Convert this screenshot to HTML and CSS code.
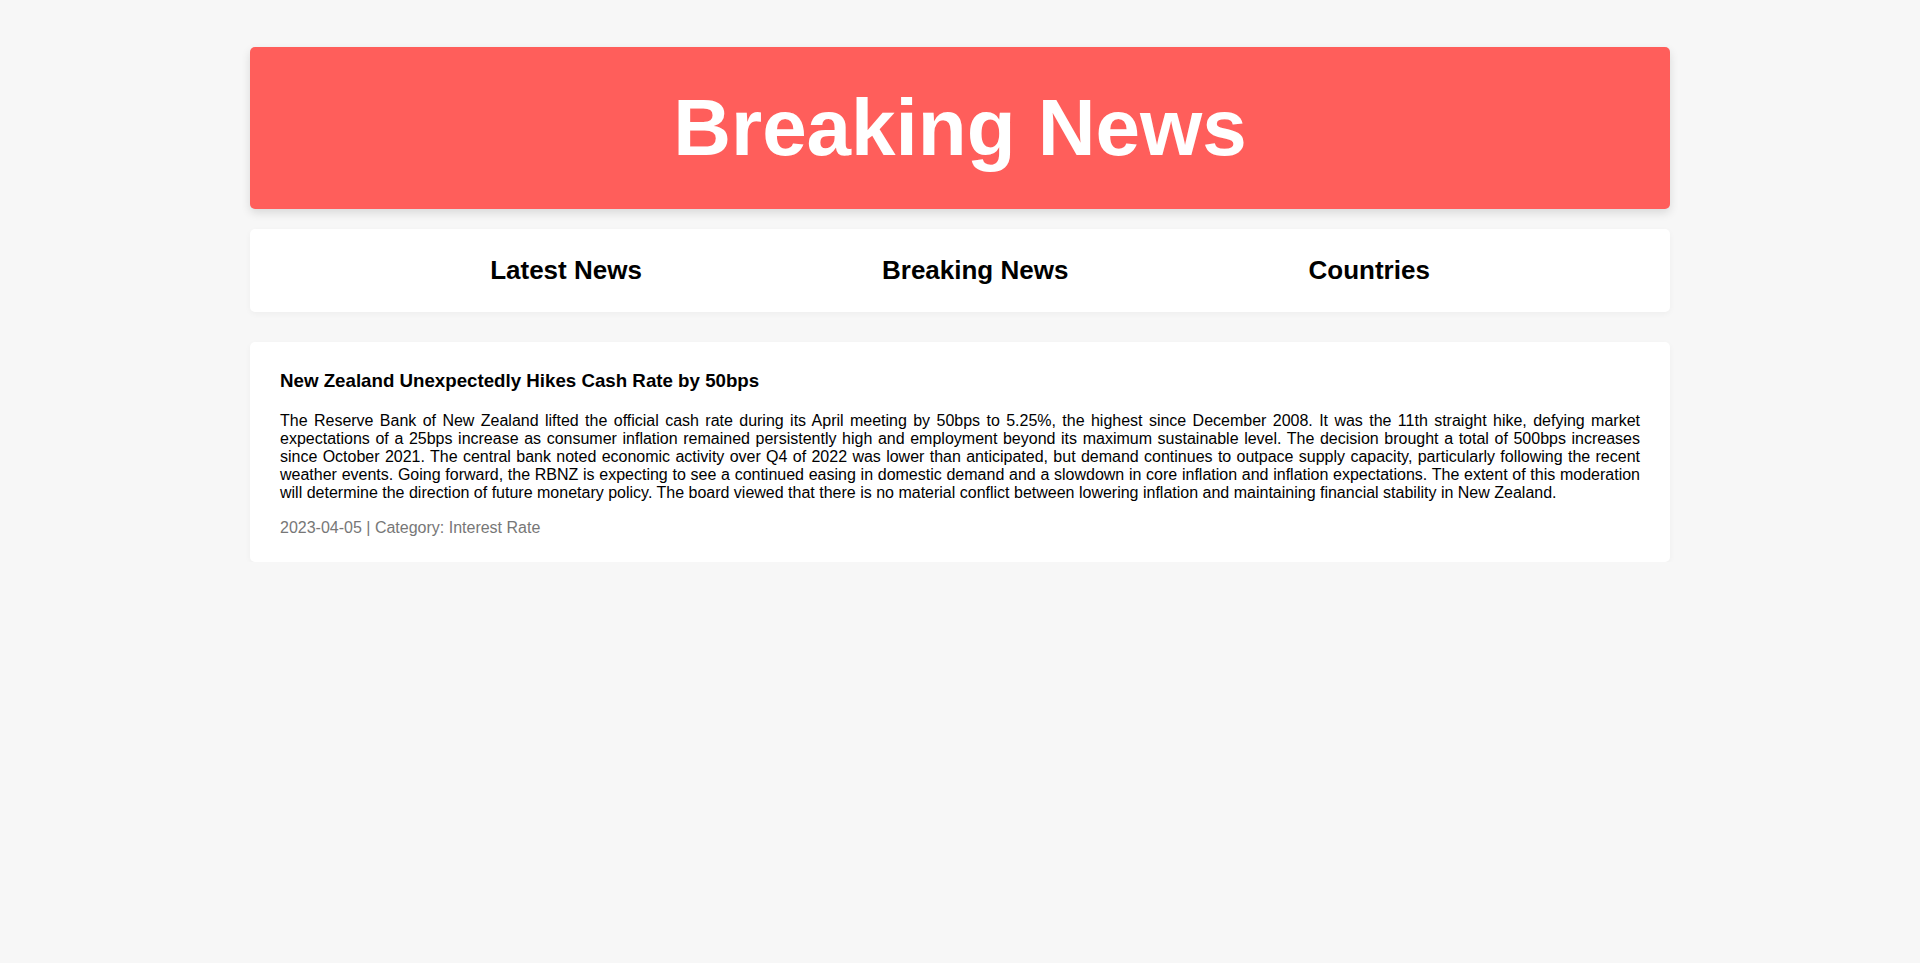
FILE: index.html
```html
<!DOCTYPE html>
<html lang="en">
<head>
<meta charset="utf-8">
<title>Breaking News</title>
<link rel="stylesheet" href="styles.css">
</head>
<body>
<div class="container">
  <header class="banner">
    <h1 class="banner-title">Breaking News</h1>
  </header>
  <nav class="nav">
    <a class="nav-link" href="#">Latest News</a>
    <a class="nav-link" href="#">Breaking News</a>
    <a class="nav-link" href="#">Countries</a>
  </nav>
  <article class="card">
    <h3 class="card-title">New Zealand Unexpectedly Hikes Cash Rate by 50bps</h3>
    <p class="card-body">The Reserve Bank of New Zealand lifted the official cash rate during its April meeting by 50bps to 5.25%, the highest since December 2008. It was the 11th straight hike, defying market expectations of a 25bps increase as consumer inflation remained persistently high and employment beyond its maximum sustainable level. The decision brought a total of 500bps increases since October 2021. The central bank noted economic activity over Q4 of 2022 was lower than anticipated, but demand continues to outpace supply capacity, particularly following the recent weather events. Going forward, the RBNZ is expecting to see a continued easing in domestic demand and a slowdown in core inflation and inflation expectations. The extent of this moderation will determine the direction of future monetary policy. The board viewed that there is no material conflict between lowering inflation and maintaining financial stability in New Zealand.</p>
    <p class="card-meta">2023-04-05 | Category: Interest Rate</p>
  </article>
</div>
</body>
</html>
```
FILE: styles.css
```css
html, body {
  margin: 0;
  padding: 0;
}
body {
  background: #f7f7f7;
  font-family: "Liberation Sans", Arial, sans-serif;
  color: #000;
}
.container {
  width: 1420px;
  margin: 0 auto;
  padding-top: 47px;
}
.banner {
  background: #ff5e5b;
  border-radius: 5px;
  padding: 35px 0;
  text-align: center;
  box-shadow: 0 4px 10px rgba(0, 0, 0, 0.12);
}
.banner-title {
  margin: 0;
  font-size: 80px;
  font-weight: bold;
  color: #fff;
}
.nav {
  margin-top: 20px;
  height: 83px;
  background: #fff;
  border-radius: 5px;
  display: flex;
  align-items: center;
  justify-content: space-evenly;
  box-shadow: 0 2px 6px rgba(0, 0, 0, 0.04);
}
.nav-link {
  font-size: 26px;
  font-weight: bold;
  color: #000;
  text-decoration: none;
}
.card {
  margin-top: 30px;
  background: #fff;
  border-radius: 5px;
  padding: 28px 30px 25px;
  box-shadow: 0 2px 6px rgba(0, 0, 0, 0.04);
}
.card-title {
  margin: 0 0 20px;
  font-size: 18.72px;
  font-weight: bold;
}
.card-body {
  margin: 0 0 17px;
  font-size: 16px;
  text-align: justify;
}
.card-meta {
  margin: 0;
  font-size: 16px;
  color: #777;
}
```
